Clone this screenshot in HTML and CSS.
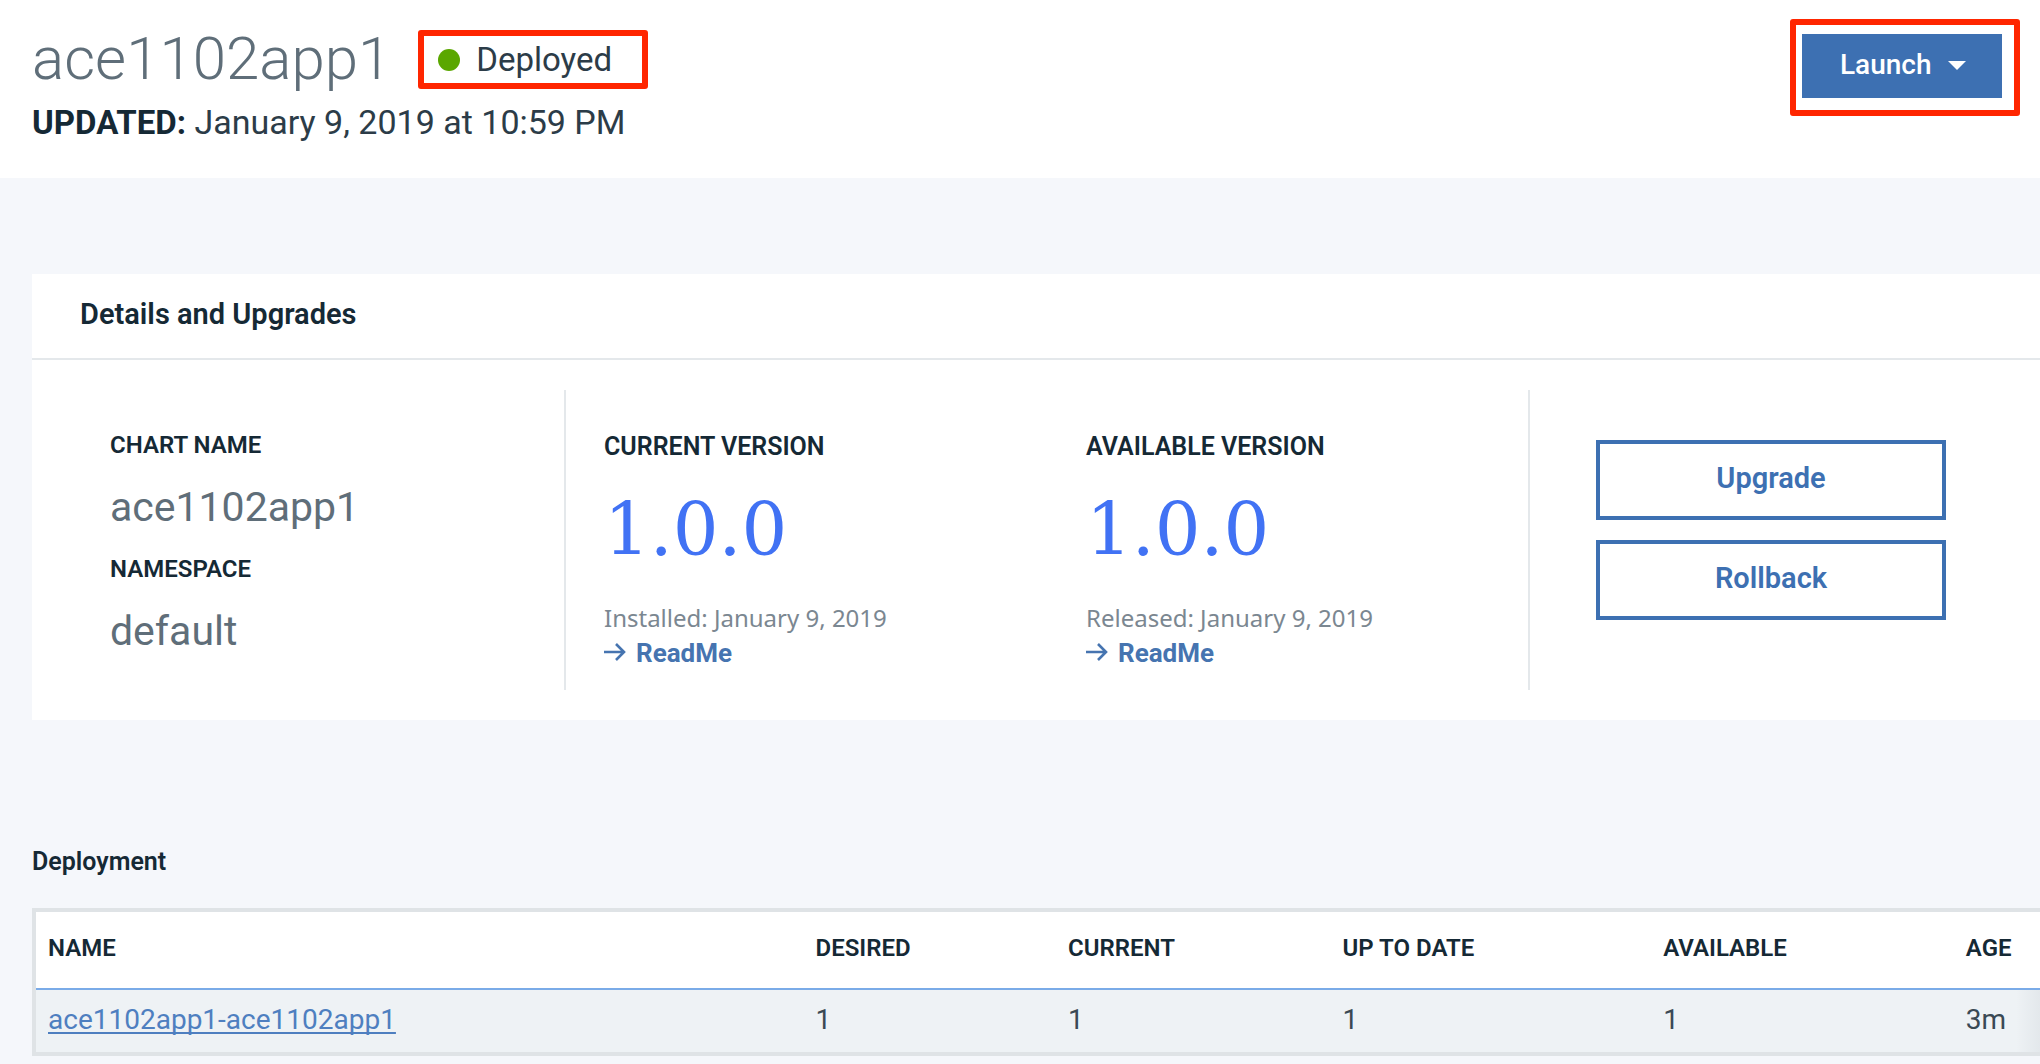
FILE: index.html
```html
<!DOCTYPE html>
<html lang="en">
<head>
<meta charset="utf-8">
<meta name="viewport" content="width=device-width, initial-scale=1">
<title>ace1102app1</title>
<link rel="stylesheet" href="styles.css">
</head>
<body>
<header class="page-header">
  <div class="heading">
    <div class="heading-row">
      <h1 class="title">ace1102app1</h1>
      <div class="status highlight"><span class="status-dot"></span>Deployed</div>
    </div>
    <p class="updated"><strong class="updated-label">UPDATED:</strong> January 9, 2019 at 10:59 PM</p>
  </div>
  <div class="launch highlight">
    <button class="launch-button" type="button">Launch
      <svg class="caret" viewBox="0 0 20 10" aria-hidden="true"><path d="M0 0h20L10 10z" fill="currentColor"/></svg>
    </button>
  </div>
</header>

<main>
  <section class="card">
    <h2 class="card-title">Details and Upgrades</h2>
    <div class="card-body">
      <dl class="column names">
        <dt class="label">CHART NAME</dt>
        <dd class="value">ace1102app1</dd>
        <dt class="label">NAMESPACE</dt>
        <dd class="value">default</dd>
      </dl>
      <div class="column version">
        <h3 class="version-label">CURRENT VERSION</h3>
        <p class="version-number">1.0.0</p>
        <p class="date">Installed: January 9, 2019</p>
        <a class="readme" href="#current"><svg class="arrow" viewBox="0 0 22 20" aria-hidden="true"><path d="M0 9h20M12 1l8 8-8 8" fill="none" stroke="currentColor" stroke-width="2.6"/></svg>ReadMe</a>
      </div>
      <div class="column version divided">
        <h3 class="version-label">AVAILABLE VERSION</h3>
        <p class="version-number">1.0.0</p>
        <p class="date">Released: January 9, 2019</p>
        <a class="readme" href="#available"><svg class="arrow" viewBox="0 0 22 20" aria-hidden="true"><path d="M0 9h20M12 1l8 8-8 8" fill="none" stroke="currentColor" stroke-width="2.6"/></svg>ReadMe</a>
      </div>
      <div class="column actions">
        <button class="action" type="button">Upgrade</button>
        <button class="action" type="button">Rollback</button>
      </div>
    </div>
  </section>

  <section class="deployment">
    <h2 class="section-title">Deployment</h2>
    <div class="table-frame">
      <table class="table">
        <colgroup>
          <col class="col-name"><col class="col-desired"><col class="col-current"><col class="col-updated"><col class="col-available"><col>
        </colgroup>
        <thead>
          <tr><th>NAME</th><th>DESIRED</th><th>CURRENT</th><th>UP TO DATE</th><th>AVAILABLE</th><th>AGE</th></tr>
        </thead>
        <tbody>
          <tr><td><a class="table-link" href="#deployment">ace1102app1-ace1102app1</a></td><td>1</td><td>1</td><td>1</td><td>1</td><td>3m</td></tr>
        </tbody>
      </table>
    </div>
  </section>
</main>
</body>
</html>
```
FILE: styles.css
```css
* { box-sizing: border-box; }

body {
  margin: 0;
  background: #f5f7fb;
  color: #152935;
  font-family: Roboto, "Liberation Sans", sans-serif;
}

h1, h2, h3, p, dl, dd { margin: 0; }

/* Header */
.page-header {
  display: flex;
  justify-content: space-between;
  align-items: flex-start;
  padding: 19px 20px 35px 32px;
  background: #fff;
}

.heading { padding-top: 8px; }

.heading-row {
  display: flex;
  align-items: center;
  gap: 27px;
}

.title {
  color: #5f6e79;
  font-size: 60px;
  font-weight: 300;
  line-height: 64px;
}

.highlight {
  border: 6px solid #ff2600;
  border-radius: 3px;
}

.status {
  display: flex;
  align-items: center;
  gap: 16px;
  padding: 4px 30px 3px 14px;
  color: #2c3c48;
  font-size: 33px;
  line-height: 40px;
}

.status-dot {
  width: 22px;
  height: 22px;
  border-radius: 50%;
  background: #5aa700;
}

.updated {
  margin-top: 11px;
  color: #2c3c48;
  font-size: 34px;
  line-height: 40px;
}

.updated-label {
  color: #152935;
  font-size: 33px;
}

.launch { padding: 9px 12px 12px 6px; }

.launch-button {
  display: flex;
  align-items: center;
  gap: 16px;
  width: 200px;
  height: 64px;
  padding: 0 0 2px 38px;
  border: 0;
  background: #3d70b2;
  color: #fff;
  font: 500 28px/36px Roboto, sans-serif;
}

.caret { width: 18px; height: 9px; }

/* Details card */
.card {
  margin: 96px 0 0 32px;
  background: #fff;
}

.card-title {
  padding: 22px 48px 26px;
  border-bottom: 2px solid #e4e8eb;
  font-size: 29px;
  font-weight: 600;
  line-height: 36px;
}

.card-body {
  display: grid;
  grid-template-columns: repeat(4, 1fr);
  padding: 30px 28px 30px 52px;
}

.column { min-height: 300px; }

.names {
  display: flex;
  flex-direction: column;
  gap: 22px;
  padding: 39px 26px 0;
  border-right: 2px solid #e4e8eb;
}

.label {
  font-size: 24px;
  font-weight: 600;
  line-height: 32px;
}

.value {
  color: #5f6e79;
  font-size: 41px;
  line-height: 48px;
}

.version { padding: 41px 38px 0; }

.version-label {
  font-size: 25px;
  font-weight: 600;
  line-height: 32px;
}

.divided { border-right: 2px solid #e4e8eb; }

.version-number {
  margin: 27px 0 32px;
  color: #4172f4;
  font: 72px/80px "DejaVu Serif", serif;
}

.date {
  color: #7b8791;
  font: 24px/32px "Noto Sans", sans-serif;
}

.readme {
  display: flex;
  align-items: center;
  gap: 10px;
  color: #4674b0;
  font-size: 26px;
  font-weight: 700;
  line-height: 38px;
  text-decoration: none;
}

.arrow { width: 22px; height: 20px; }

.actions {
  display: flex;
  flex-direction: column;
  gap: 20px;
  padding: 50px 66px 0;
}

.action {
  height: 80px;
  padding: 0 0 4px;
  border: 4px solid #3d70b2;
  background: #fff;
  color: #3d70b2;
  font: 600 29px/36px Roboto, sans-serif;
}

/* Deployment table */
.deployment { padding: 126px 0 8px 32px; }

.section-title {
  margin-bottom: 30px;
  font-size: 25px;
  font-weight: 600;
  line-height: 32px;
}

.table-frame {
  position: relative;
  border: 4px solid #dfe3e6;
  border-right: 0;
}

.table-frame::after {
  content: "";
  position: absolute;
  right: 0;
  bottom: 0;
  width: 24px;
  height: 62px;
  background: linear-gradient(to right, transparent, rgba(21, 41, 53, 0.05));
}

.table {
  width: 100%;
  border-collapse: separate;
  border-spacing: 0;
  table-layout: fixed;
  background: #fff;
  text-align: left;
}

.col-name { width: 38.3%; }
.col-desired { width: 12.6%; }
.col-current { width: 13.7%; }
.col-updated { width: 16%; }
.col-available { width: 15.1%; }

.table th {
  padding: 20px 0 24px 12px;
  border-bottom: 2px solid #7aabe8;
  font-size: 24px;
  font-weight: 600;
  line-height: 32px;
}

.table td {
  padding: 12px 0 14px 12px;
  background: #eef2f5;
  color: #3a4954;
  font-size: 28px;
  line-height: 36px;
}

.table-link {
  color: #4e7fc0;
  text-decoration-thickness: 2px;
  text-underline-offset: 3px;
  text-decoration-skip-ink: none;
}
```
